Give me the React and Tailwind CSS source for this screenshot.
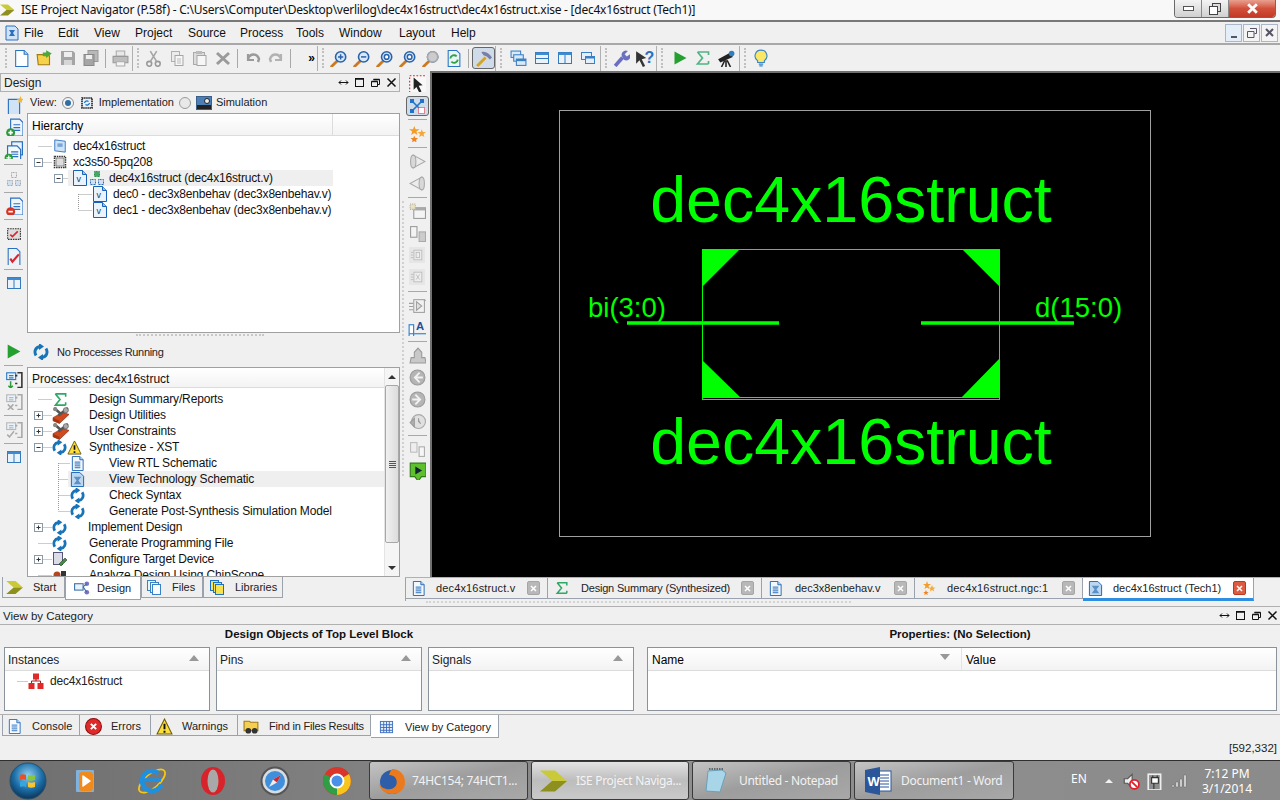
import React from "react";

const Svg = ({ s = 16, w, h, v = "0 0 16 16", c = "", children }) => (
  <svg width={w || s} height={h || s} viewBox={v} className={"shrink-0 " + c}>{children}</svg>
);

const Doc = ({ s = 16, stroke = "#1f66b5", fill = "#f4f8fd", lines = true }) => (
  <Svg s={s}>
    <path d="M2.500 .5h8l3.500 3.500v11.500h-11.500z" fill={fill} stroke={stroke} />
    <path d="M10.500 .5v3.500h3.500" fill="#b9d4f0" stroke={stroke} />
    {lines && <path d="M5 6.500h6M5 8.500h6M5 10.500h6M5 12.500h6" stroke={stroke} />}
  </Svg>
);
const VDoc = () => (
  <Svg s={16}>
    <path d="M1.500 .5h9l4 4v11h-13z" fill="#eaf2fb" stroke="#1762b8" />
    <path d="M10.500 .5v4h4" fill="#9cc3ec" stroke="#1762b8" />
    <text x="4.500" y="12" fontSize="9" fill="#1a3c66" fontFamily="Liberation Sans">v</text>
  </Svg>
);
const Refresh = ({ s = 16, color = "#1874b8" }) => (
  <Svg s={s}>
    <path d="M3 11.500C.5 7 3 3 7 2.500" fill="none" stroke={color} strokeWidth="2.900" />
    <path d="M6 -1l5 3.500-5 3.500z" fill={color} />
    <path d="M13 4.500c2.500 4.500 0 8.500-4 9" fill="none" stroke={color} strokeWidth="2.900" />
    <path d="M10 17l-5-3.500 5-3.500z" fill={color} />
  </Svg>
);
const Sigma = ({ s = 16, color = "#2fa765" }) => (
  <Svg s={s}>
    <path d="M2.500 2h11v3M13.500 14h-11l5-6-5-6M13.500 14v-3" fill="none" stroke={color} strokeWidth="1.700" />
  </Svg>
);
const ToolBox = () => (
  <Svg s={17} c="-my-[1px]">
    <path d="M1 10l9-5 6 2-9 8.500-6-2.500z" fill="#d1491f" stroke="#7a2a10" strokeWidth=".6" />
    <path d="M1 10l6 3v2.500l-6-2.500z" fill="#a8350f" />
    <path d="M2 1l7 6M15 1L6 8" stroke="#555" strokeWidth="2.400" />
    <circle cx="13" cy="3" r="2.400" fill="#aaa" stroke="#555" strokeWidth=".6" />
    <circle cx="3" cy="2" r="2" fill="#888" />
  </Svg>
);
const Warn = ({ s = 16 }) => (
  <Svg s={s}>
    <path d="M8 1l7 14h-14z" fill="#fbdd3c" stroke="#6b5a10" />
    <path d="M8 5.500v5M8 12v1.800" stroke="#111" strokeWidth="1.800" />
  </Svg>
);
const Chip = ({ color = "#333" }) => (
  <Svg s={14} v="0 0 14 14">
    <rect x="1.500" y="1.500" width="11" height="11" fill="#fff" stroke={color} strokeWidth="1.500" strokeDasharray="1.500 .8" />
    <rect x="3" y="3" width="8" height="8" fill="#ddd" stroke={color} strokeWidth=".5" />
  </Svg>
);
const Blocks = ({ dim = false }) => {
  const a = dim ? "#aaa" : "#2f6fb4";
  const t = dim ? "#aaa" : "#2d9150";
  return (
    <Svg s={16}>
      <rect x="5.500" y="1.500" width="5" height="5" fill={dim ? "#eee" : "#46a866"} stroke={t} strokeDasharray="1 .5" />
      <rect x="1.500" y="9.500" width="5" height="5" fill="#cfe0f3" stroke={a} strokeDasharray="1 .5" />
      <rect x="9.500" y="9.500" width="5" height="5" fill="#cfe0f3" stroke={a} strokeDasharray="1 .5" />
    </Svg>
  );
};
const Layout3 = ({ kind = "cols" }) => (
  <Svg s={16}>
    <rect x="1.500" y="2.500" width="13" height="11" fill="#eaf2fb" stroke="#3579bd" />
    <rect x="1.500" y="2.500" width="13" height="2.500" fill="#3f8ad0" />
    {kind === "cols" && <path d="M8 5v8" stroke="#3579bd" />}
    {kind === "rows" && <path d="M1.500 8.500h13" stroke="#3579bd" />}
  </Svg>
);
const Windows = () => (
  <Svg s={17}>
    <rect x="1" y="1" width="9" height="6" fill="#d9e9f8" stroke="#3a80c4" />
    <rect x="3.500" y="4.500" width="9" height="6" fill="#d9e9f8" stroke="#3a80c4" />
    <rect x="6" y="8.500" width="9" height="6" fill="#d9e9f8" stroke="#3a80c4" />
    <rect x="6" y="8.500" width="9" height="2" fill="#3a80c4" />
  </Svg>
);
const Win2 = () => (
  <Svg s={16}>
    <rect x="1.500" y="2.500" width="10" height="7" fill="#e4effa" stroke="#3a80c4" />
    <rect x="5.500" y="6.500" width="9" height="7" fill="#e4effa" stroke="#3a80c4" />
    <rect x="5.500" y="6.500" width="9" height="2" fill="#3a80c4" />
  </Svg>
);
const Mag = ({ kind }) => (
  <Svg s={17}>
    <path d="M1.500 15.500l5-5" stroke="#cc7a22" strokeWidth="2.600" strokeLinecap="round" />
    <circle cx="10" cy="6.500" r="4.800" fill="#d8e9fb" stroke="#2a62a8" strokeWidth="1.500" />
    {kind === "in" && <path d="M7.500 6.500h5M10 4v5" stroke="#2a62a8" strokeWidth="1.400" />}
    {kind === "out" && <path d="M7.500 6.500h5" stroke="#2a62a8" strokeWidth="1.400" />}
    {kind === "ring" && <circle cx="10" cy="6.500" r="2.200" fill="#fff" stroke="#2a62a8" strokeWidth="1.400" />}
    {kind === "dim" && <circle cx="10" cy="6.500" r="4.800" fill="#ccc" stroke="#aaa" strokeWidth="1.500" />}
  </Svg>
);

/* Toolbar atoms */
const Cell = ({ children, c = "" }) => <div className={"w-[23px] h-[24px] flex items-center justify-center shrink-0 " + c}>{children}</div>;
const Grip = () => (
  <div className="w-[9px] h-[20px] flex justify-center shrink-0">
    <div className="w-[2px] h-full border-l-2 border-dotted border-[#c0c0c0]" />
  </div>
);
const TSep = () => <div className="w-[7px] flex justify-center shrink-0"><div className="w-px h-[19px] bg-[#a8a8a8]" /></div>;
const GEnd = () => <div className="w-px h-[25px] bg-[#b0b0b0] shrink-0" />;

const Toolbar = () => (
  <div className="h-[26px] flex items-center bg-[#f0f0f0] pl-px shrink-0">
    <Grip />
    <Cell><Doc s={17} stroke="#2a73c0" fill="#fdfeff" lines={false} /></Cell>
    <Cell>
      <Svg s={18}>
        <path d="M1 5h5l1 1h5v8H2z" fill="#f6d24a" stroke="#a27a12" />
        <path d="M9 1l5 3-5 4V6H6V3h3z" fill="#4da83a" />
      </Svg>
    </Cell>
    <Cell>
      <Svg s={16}><path d="M1 1h12l2 2v12H1z" fill="#a5a5a5" /><rect x="4" y="2" width="8" height="5" fill="#eee" /><rect x="4" y="10" width="8" height="5" fill="#d6d6d6" /></Svg>
    </Cell>
    <Cell>
      <Svg s={16}><rect x="5" y="0.500" width="10" height="11" fill="#b8b8b8" stroke="#999" /><rect x="1" y="4.500" width="10" height="11" fill="#a5a5a5" stroke="#888" /><rect x="3" y="5" width="6" height="4" fill="#eee" /></Svg>
    </Cell>
    <TSep />
    <Cell>
      <Svg s={17}><path d="M4 1h8v5H4z" fill="#e8e8e8" stroke="#aaa" /><path d="M1 6h14v6H1z" fill="#bdbdbd" stroke="#999" /><path d="M4 11h8v4H4z" fill="#f4f4f4" stroke="#aaa" /></Svg>
    </Cell>
    <GEnd />
    <Grip />
    <Cell>
      <Svg s={17}><circle cx="4" cy="13" r="2.300" fill="none" stroke="#9a9a9a" strokeWidth="1.500" /><circle cx="12" cy="13" r="2.300" fill="none" stroke="#9a9a9a" strokeWidth="1.500" /><path d="M5 11L11 1M11 11L5 1" stroke="#a5a5a5" strokeWidth="1.500" /></Svg>
    </Cell>
    <Cell>
      <Svg s={16}><rect x="2.500" y="1.500" width="8" height="10" fill="#ececec" stroke="#b0b0b0" /><rect x="6" y="5.500" width="8" height="10" fill="#f6f6f6" stroke="#a5a5a5" /><path d="M8 9h4M8 11h4M8 13h4" stroke="#bbb" /></Svg>
    </Cell>
    <Cell>
      <Svg s={16}><rect x="1.500" y="2.500" width="11" height="12" fill="#dcdcdc" stroke="#aaa" /><rect x="5" y="5.500" width="9" height="10" fill="#f6f6f6" stroke="#a5a5a5" /><rect x="4" y="1" width="6" height="3" fill="#bbb" /></Svg>
    </Cell>
    <Cell>
      <Svg s={16}><path d="M2 3l12 11M14 3L2 14" stroke="#9a9a9a" strokeWidth="3" /></Svg>
    </Cell>
    <TSep />
    <Cell>
      <Svg s={16}><path d="M3 4v6h6" fill="none" stroke="#9a9a9a" strokeWidth="2.200" /><path d="M3 9C5 3 12 3 14 9l-1 3" fill="none" stroke="#9a9a9a" strokeWidth="2.400" /></Svg>
    </Cell>
    <Cell>
      <Svg s={16}><path d="M13 4v6H7" fill="none" stroke="#b2b2b2" strokeWidth="2.200" /><path d="M13 9C11 3 4 3 2 9l1 3" fill="none" stroke="#b2b2b2" strokeWidth="2.400" /></Svg>
    </Cell>
    <TSep />
    <div className="w-[23px] h-[24px] flex items-center justify-end pr-[2px] text-[12px] leading-none font-bold shrink-0">»</div>
    <GEnd />
    <Grip />
    <Cell><Mag kind="in" /></Cell>
    <Cell><Mag kind="out" /></Cell>
    <Cell><Mag kind="ring" /></Cell>
    <Cell><Mag kind="ring" /></Cell>
    <Cell><Mag kind="dim" /></Cell>
    <Cell>
      <Svg s={17}><path d="M3 .5h8l3 3v12H3z" fill="#eaf3fb" stroke="#2a73c0" /><path d="M5 8a3.500 3.500 0 016-2M12 9a3.500 3.500 0 01-6 2" fill="none" stroke="#2ba43a" strokeWidth="1.800" /></Svg>
    </Cell>
    <TSep />
    <div className="w-[23px] h-[22px] flex items-center justify-center rounded-[3px] border border-[#666] bg-[#cfdbe8] shrink-0">
      <Svg s={17}><path d="M2 15l8-8" stroke="#d9a21c" strokeWidth="2.600" /><path d="M6 2c4-1 7 1 10 5l-2 2-3-3-3-1z" fill="#7a7ea8" /></Svg>
    </div>
    <GEnd />
    <Grip />
    <div className="w-[2px] shrink-0" />
    <Cell><Windows /></Cell>
    <Cell><Layout3 kind="rows" /></Cell>
    <Cell><Layout3 kind="cols" /></Cell>
    <Cell><Win2 /></Cell>
    <div className="w-[1px] shrink-0" />
    <GEnd />
    <Grip />
    <Cell>
      <Svg s={17}><path d="M2 15L9 7" stroke="#6c6fc0" strokeWidth="3.400" /><path d="M9 7a4 4 0 015-6l-3 3 2 2 3-2a4 4 0 01-6 5z" fill="#6c6fc0" /></Svg>
    </Cell>
    <Cell>
      <Svg s={18}><path d="M1 2l9 6-4 1 3 6-2 1-3-6-3 3z" fill="#333" /></Svg>
      <span className="text-[16px] font-bold text-[#2a6fc0] -ml-[8px] leading-none">?</span>
    </Cell>
    <GEnd />
    <Grip />
    <div className="w-[2px] shrink-0" />
    <Cell><Svg s={16}><path d="M2.500 1.500l12 6.500-12 6.500z" fill="#23a02f" /></Svg></Cell>
    <Cell><Sigma s={16} color="#4fb482" /></Cell>
    <Cell>
      <Svg s={18}><path d="M1 9l11-6 2 4-11 5z" fill="#222" /><circle cx="13" cy="4" r="2.500" fill="#2f7fc0" /><path d="M7 10l-3 6M8 10v6M9 10l3 6" stroke="#222" strokeWidth="1.400" /></Svg>
    </Cell>
    <div className="w-[2px] shrink-0" />
    <GEnd />
    <Grip />
    <Cell>
      <Svg s={18}><path d="M8 1a5.200 5.200 0 00-3 9.500V12h6v-1.500A5.200 5.200 0 008 1z" fill="#fbe766" stroke="#3a86c8" /><path d="M6 13.500h4M6.500 15h3" stroke="#3a86c8" strokeWidth="1.200" /></Svg>
    </Cell>
  </div>
);

const PanelBtns = () => (
  <div className="flex items-center gap-[5px] text-[#111]">
    <Svg s={11} v="0 0 11 11"><path d="M1 5.500h9M3 3.500l-2 2 2 2M8 3.500l2 2-2 2" fill="none" stroke="#111" /></Svg>
    <Svg s={11} v="0 0 11 11"><rect x="1.500" y="1.500" width="8" height="8" fill="none" stroke="#111" /><path d="M1.500 2h8" stroke="#111" strokeWidth="1.500" /></Svg>
    <Svg s={11} v="0 0 11 11"><path d="M3.500 2.500h6v5h-2M1.500 4.500h6v5h-6z" fill="none" stroke="#111" /><path d="M3.500 2.500h6M1.500 4.500h6" stroke="#111" strokeWidth="1.500" /></Svg>
    <Svg s={11} v="0 0 11 11"><path d="M1.500 1.500l8 8M9.500 1.500l-8 8" stroke="#111" strokeWidth="1.500" /></Svg>
  </div>
);

const Tree = ({ w = 22, kind = "line", up = false, down = false }) => (
  <Svg w={w} h={16} v={`0 0 ${w} 16`}>
    {up && <path d="M8.500 0v8" stroke="#999" strokeDasharray="1 1" />}
    {down && <path d="M8.500 8v8" stroke="#999" strokeDasharray="1 1" />}
    <path d={`M8.500 8.500H${w}`} stroke="#999" strokeDasharray="1 1" />
    {kind !== "line" && <rect x="4.500" y="4.500" width="8" height="8" fill="#fff" stroke="#8a9aa8" />}
    {kind !== "line" && <path d="M6.500 8.500h4" stroke="#333" />}
    {kind === "plus" && <path d="M8.500 6.500v4" stroke="#333" />}
  </Svg>
);

const Row = ({ children, c = "" }) => <div className={"h-4 flex items-center shrink-0 whitespace-nowrap " + c}>{children}</div>;

const HeaderCell = ({ children, c = "" }) => (
  <div className={"bg-linear-to-b from-[#ffffff] to-[#f3f3f3] border-b border-[#dcdcdc] text-[12px] flex items-center " + c}>{children}</div>
);

const SideBtn = ({ children, c = "" }) => <div className={"h-[22px] w-full flex items-center justify-center shrink-0 " + c}>{children}</div>;
const SideSep = ({ c = "my-[2px]" }) => <div className={"w-[19px] h-px bg-[#a8a8a8] shrink-0 self-center " + c} />;

const AddDoc = ({ color = "#2b9a3a", sym = "plus" }) => (
  <Svg s={18}>
    <path d="M5 1h8l3 3v12H5z" fill="#eef5fc" stroke="#2a6fc0" />
    <path d="M7.500 6h6M7.500 8.500h6M7.500 11h6" stroke="#2a6fc0" />
    <circle cx="5" cy="13" r="4" fill={color} />
    <path d="M3 13h4" stroke="#fff" strokeWidth="1.500" />
    {sym === "plus" && <path d="M5 11v4" stroke="#fff" strokeWidth="1.500" />}
  </Svg>
);

const RunIcon = ({ dim, sym }) => {
  const col = dim ? "#a8a8a8" : "#333";
  const b = dim ? "#b8b8b8" : "#2d7bc4";
  return (
    <Svg s={18}>
      <rect x="1.500" y="2.500" width="8" height="6" fill="#eaf2fb" stroke={b} />
      <path d="M3.500 5h4M3.500 7h4" stroke={b} />
      <path d="M11 2.500h4v13h-4M9 5h2M9 12h2" fill="none" stroke={col} strokeWidth="1.400" />
      {sym === "down" && <path d="M5 10v6M3 14l2 2 2-2" fill="none" stroke="#2a9a3a" strokeWidth="1.300" />}
      {sym === "x" && <path d="M2.500 11l5 5M7.500 11l-5 5" stroke="#aaa" strokeWidth="1.400" />}
      {sym === "check" && <path d="M2 13l2 2 4-5" fill="none" stroke="#aaa" strokeWidth="1.400" />}
    </Svg>
  );
};

const Chevron = ({ w = 20, h = 14 }) => (
  <Svg w={w} h={h} v="0 0 20 14" c="">
    <path d="M0 0h10l8 7H8z" fill="#c9c93a" />
    <path d="M8 7h10l-8 7H0z" fill="#8d8f1e" />
  </Svg>
);

function BottomTab({ w, active, icon, gap, pl, children }) {
  return (
    <div className={`${w} flex items-center shrink-0 ${gap} ${pl} border-x border-b border-[#9aa3ad] ${active ? "h-[23px] bg-white" : "h-[21px] bg-[#efefef]"}`}>
      {icon}
      <span>{children}</span>
    </div>
  );
}

const LeftPane = () => (
  <div className="w-[400px] h-full flex flex-col shrink-0">
    <div className="h-[2px] shrink-0" />
    <div className="h-[19px] mx-0 flex items-center justify-between border border-[#b0b0b0] bg-[#efefef] pl-[3px] pr-[2px] shrink-0">
      <span className="text-[12px] text-[#222]">Design</span>
      <PanelBtns />
    </div>
    <div className="flex h-[241px] shrink-0">
      <div className="w-[27px] flex flex-col items-stretch pt-[2px] shrink-0">
        <SideBtn>
          <Svg s={18}><path d="M3 3h10v14H3z" fill="#cfe2f6" stroke="#2a6fc0" /><path d="M14 0l.8 2.500L17 3l-2 1 .2 2.500L14 5l-2 1.500.2-2.500-2-1 2.500-.5z" fill="#f5b62b" /></Svg>
        </SideBtn>
        <SideBtn><AddDoc /></SideBtn>
        <SideBtn><Svg s={19}><rect x="6.500" y="1.500" width="9" height="11" fill="#eaf3fb" stroke="#2a6fc0" /><path d="M3 5h8l3 3v9H3z" fill="#f4f9fe" stroke="#2a6fc0" /><path d="M6 10h6M6 12h6M6 14h6" stroke="#2a6fc0" /><circle cx="4" cy="15" r="3.500" fill="#2b9a3a" /><path d="M2 15h4M4 13v4" stroke="#fff" /></Svg></SideBtn>
        <SideSep c="mt-[4px] mb-[3px]" />
        <SideBtn><Blocks dim /></SideBtn>
        <SideSep c="my-[2px]" />
        <SideBtn><AddDoc color="#d63324" sym="minus" /></SideBtn>
        <SideSep />
        <SideBtn><Svg s={17}><rect x="2.500" y="3.500" width="12" height="10" fill="#ddd" stroke="#333" strokeDasharray="1.500 .8" /><path d="M5 9l2 2 5-5" fill="none" stroke="#d9252d" strokeWidth="1.500" /></Svg></SideBtn>
        <div className="h-px shrink-0" />
        <SideBtn><Svg s={17}><path d="M3 .5h8l3 3v13H3z" fill="#eaf3fb" stroke="#2a6fc0" /><path d="M5 10l2 3 6-7" fill="none" stroke="#d9252d" strokeWidth="2" /></Svg></SideBtn>
        <SideSep />
        <SideBtn><Layout3 /></SideBtn>
      </div>
      <div className="flex-1 flex flex-col min-w-0">
        <div className="h-[21px] flex items-center text-[11px] gap-[5px] pl-[3px] shrink-0 text-[#222]">
          <span>View:</span>
          <span className="w-[12px] h-[12px] rounded-full border border-[#8a8a8a] bg-[#f4f4f4] flex items-center justify-center"><span className="w-[6px] h-[6px] rounded-full bg-[#2b6ea8]" /></span>
          <Svg s={16}><rect x="3" y="3" width="10" height="10" fill="#e6f0fa" stroke="#222" strokeDasharray="1.500 .6" strokeWidth="1.600" /><path d="M5.500 8a2.500 2.500 0 014-1.500M10.500 8a2.500 2.500 0 01-4 1.500" fill="none" stroke="#1f74c0" strokeWidth="1.300" /></Svg>
          <span className="-ml-px">Implementation</span>
          <span className="w-[12px] h-[12px] rounded-full border border-[#9a9a9a] bg-[#e8e8e8]" />
          <Svg s={16}><rect x="0.500" y="1.500" width="15" height="13" fill="#4a7fb8" stroke="#3a5f88" /><circle cx="11" cy="6" r="2.500" fill="#eee" stroke="#222" /><rect x="1" y="10" width="14" height="4" fill="#222" /></Svg>
          <span className="-ml-px">Simulation</span>
        </div>
        <div className="flex-1 border border-[#a0a0a0] bg-white flex flex-col min-h-0">
          <div className="flex h-[22px] shrink-0">
            <HeaderCell c="w-[305px] pl-[4px] pt-[2px] border-r border-r-[#dcdcdc]">Hierarchy</HeaderCell>
            <HeaderCell c="flex-1" />
          </div>
          <div className="pt-[2px] text-[12px] tracking-[-0.2px] text-[#111] flex flex-col">
            <Row c="pl-[2px]">
              <Tree />
              <span className="w-[1px]" />
              <Svg s={14} v="0 0 14 16"><path d="M1 1l12 1.500V15L1 13.500z" fill="#cfe2f6" stroke="#2a6fc0" /><rect x="4" y="5" width="6" height="4" fill="#7aa6d6" /></Svg>
              <span className="ml-[6px]">dec4x16struct</span>
            </Row>
            <Row c="pl-[2px]">
              <Tree kind="minus" />
              <span className="w-[1px]" />
              <Chip />
              <span className="ml-[6px]">xc3s50-5pq208</span>
            </Row>
            <Row c="pl-[22px]">
              <Tree kind="minus" w={18} />
              <div className="flex items-center bg-[#efefef] h-4 w-[265px]">
                <span className="w-[4px]" />
                <VDoc />
                <span className="w-[1px]" />
                <Blocks />
                <span className="ml-[4px]">dec4x16struct (dec4x16struct.v)</span>
              </div>
            </Row>
            <Row c="pl-[42px]">
              <Tree down />
              <VDoc />
              <span className="ml-[5px]">dec0 - dec3x8enbehav (dec3x8enbehav.v)</span>
            </Row>
            <Row c="pl-[42px]">
              <Tree up />
              <VDoc />
              <span className="ml-[5px]">dec1 - dec3x8enbehav (dec3x8enbehav.v)</span>
            </Row>
          </div>
        </div>
      </div>
    </div>
    <div className="h-[4px] flex justify-center items-center shrink-0">
      <div className="w-[128px] h-[2px] border-t-2 border-dotted border-[#c8c8c8]" />
    </div>
    <div className="flex h-[240px] shrink-0">
      <div className="w-[27px] flex flex-col items-stretch pt-[3px] shrink-0">
        <SideBtn><Svg s={17}><path d="M2.500 1.500l12 6.500-12 6.500z" fill="#23a02f" /></Svg></SideBtn>
        <SideSep c="my-[2.500px]" />
        <SideBtn><RunIcon sym="down" /></SideBtn>
        <SideBtn><RunIcon dim sym="x" /></SideBtn>
        <SideSep c="my-[2.500px]" />
        <SideBtn><RunIcon dim sym="check" /></SideBtn>
        <SideSep c="my-[2.500px]" />
        <SideBtn><Layout3 /></SideBtn>
      </div>
      <div className="flex-1 flex flex-col min-w-0">
        <div className="h-[30px] flex items-center gap-[8px] pl-[6px] text-[11px] tracking-[-0.3px] text-[#222] shrink-0">
          <Refresh s={16} />
          <span>No Processes Running</span>
        </div>
        <div className="flex-1 flex border border-[#a0a0a0] bg-white min-h-0">
          <div className="flex-1 min-w-0 flex flex-col overflow-hidden">
            <HeaderCell c="h-[19px] pl-[4px] pt-[2px] mt-[1px] shrink-0 text-[#111]">Processes: dec4x16struct</HeaderCell>
            <div className="text-[12px] tracking-[-0.15px] text-[#111] flex flex-col pt-[3px]">
              <Row c="pl-[2px]"><Tree /><span className="w-[1px]" /><Sigma s={15} /><span className="ml-[21px]">Design Summary/Reports</span></Row>
              <Row c="pl-[2px]"><Tree kind="plus" /><ToolBox /><span className="ml-[20px]">Design Utilities</span></Row>
              <Row c="pl-[2px]"><Tree kind="plus" /><ToolBox /><span className="ml-[20px]">User Constraints</span></Row>
              <Row c="pl-[2px]"><Tree kind="minus" /><Refresh s={15} /><Warn s={15} /><span className="ml-[7px]">Synthesize - XST</span></Row>
              <Row c="pl-[22px]"><Tree w={20} down /><Doc s={15} /><span className="ml-[24px]">View RTL Schematic</span></Row>
              <Row c="pl-[22px]">
                <Tree w={18} up down />
                <div className="flex items-center bg-[#efefef] h-4 flex-1">
                  <span className="w-[2px]" />
                  <Svg s={15}><path d="M1.500 .5h9l4 4v11h-13z" fill="#bcd6f0" stroke="#1762b8" /><path d="M4 5h8l-3 4 3 4H4l3-4z" fill="#5b8fc8" /></Svg>
                  <span className="ml-[24px]">View Technology Schematic</span>
                </div>
              </Row>
              <Row c="pl-[22px]"><Tree w={20} up down /><Refresh s={15} /><span className="ml-[24px]">Check Syntax</span></Row>
              <Row c="pl-[22px]"><Tree w={20} up /><Refresh s={15} /><span className="ml-[24px]">Generate Post-Synthesis Simulation Model</span></Row>
              <Row c="pl-[2px]"><Tree kind="plus" /><Refresh s={15} /><span className="ml-[21px]">Implement Design</span></Row>
              <Row c="pl-[2px]"><Tree /><Refresh s={15} /><span className="ml-[22px]">Generate Programming File</span></Row>
              <Row c="pl-[2px]"><Tree kind="plus" /><Svg s={16}><rect x="1.500" y="1.500" width="9" height="12" fill="#dcdce8" stroke="#557" /><path d="M7 13l6-6 2 2-6 6z" fill="#3e8f3a" stroke="#222" strokeWidth=".5" /></Svg><span className="ml-[21px]">Configure Target Device</span></Row>
              <Row c="pl-[2px]"><Tree /><Svg s={16}><circle cx="5" cy="8" r="3.500" fill="#b5451f" /><rect x="9" y="4" width="5" height="7" fill="#333" /></Svg><span className="ml-[21px]">Analyze Design Using ChipScope</span></Row>
            </div>
          </div>
          <div className="w-[15px] flex flex-col items-center bg-[#f5f5f5] border-l border-[#e4e4e4] shrink-0">
            <div className="h-[17px] flex items-center justify-center"><div className="w-0 h-0 border-x-[4px] border-x-transparent border-b-[4px] border-b-[#333]" /></div>
            <div className="w-[14px] h-[158px] rounded-[2px] border border-[#a8a8a8] bg-linear-to-r from-[#f0f0f0] to-[#dcdcdc] flex flex-col items-center justify-center gap-px">
              <span className="w-[7px] h-px bg-[#555]" /><span className="w-[7px] h-px bg-[#555]" /><span className="w-[7px] h-px bg-[#555]" /><span className="w-[7px] h-px bg-[#555]" />
            </div>
            <div className="flex-1" />
            <div className="h-[17px] flex items-center justify-center"><div className="w-0 h-0 border-x-[4px] border-x-transparent border-t-[4px] border-t-[#333]" /></div>
          </div>
        </div>
      </div>
    </div>
    <div className="flex items-start h-[23px] pl-[2px] text-[11px] text-[#222] shrink-0">
      <BottomTab w="w-[63px]" icon={<Chevron w={19} h={13} />} gap="gap-[8px]" pl="pl-[3px]">Start</BottomTab>
      <BottomTab w="w-[76px]" active icon={<Svg s={17}><rect x="1.500" y="3.500" width="8" height="6" fill="#eaf2fb" stroke="#3a6ea8" /><circle cx="13" cy="3.500" r="2.200" fill="#7a74c0" /><circle cx="13" cy="11.500" r="2.200" fill="#7a74c0" /><path d="M9.500 6.500L13 3.500M9.500 6.500l3.500 5" stroke="#3a6ea8" /></Svg>} gap="gap-[7px]" pl="pl-[7px]">Design</BottomTab>
      <BottomTab w="w-[62px]" icon={<Svg s={16}><rect x="1.500" y="1.500" width="8" height="10" fill="#eef4fb" stroke="#3a80c4" /><rect x="4.500" y="3.500" width="8" height="10" fill="#eef4fb" stroke="#3a80c4" /><rect x="6.500" y="5.500" width="8" height="10" fill="#f8fbff" stroke="#3a80c4" /></Svg>} gap="gap-[10px]" pl="pl-[4px]">Files</BottomTab>
      <BottomTab w="w-[80px]" icon={<Svg s={16}><rect x="1.500" y="1.500" width="8" height="10" fill="#f7e34f" stroke="#1f70c0" /><rect x="4.500" y="3.500" width="8" height="10" fill="#f7e34f" stroke="#1f70c0" /><rect x="6.500" y="5.500" width="8" height="10" fill="#f7e34f" stroke="#1f70c0" /></Svg>} gap="gap-[10px]" pl="pl-[5px]">Libraries</BottomTab>
    </div>
  </div>
);

const VBtn = ({ children }) => <div className="h-[22px] flex items-center justify-center shrink-0">{children}</div>;
const VSep = () => <div className="h-px w-[19px] bg-[#a8a8a8] self-center my-[2.500px] shrink-0" />;
const Circ = ({ d }) => (
  <Svg s={17}>
    <circle cx="8" cy="8" r="7" fill="#b5b5b5" stroke="#9a9a9a" />
    <path d={d} fill="none" stroke="#f2f2f2" strokeWidth="1.700" />
  </Svg>
);

const VToolbar = () => (
  <div className="w-[25px] h-full pt-[1px] pr-[1px] flex flex-col shrink-0 bg-[#f0f0f0]">
    <VBtn>
      <Svg s={18}><rect x="1.500" y="1.500" width="15" height="15" fill="#f8f8f8" stroke="#e21b24" strokeDasharray="1.500 1.500" /><path d="M5 3l8 7-3.500.5 2.500 5-2 1-2.500-5L5 14z" fill="#222" /></Svg>
    </VBtn>
    <div className="h-[20px] w-[23px] mx-auto mt-[2px] rounded-[3px] border border-[#666] bg-[#cfdbe8] flex items-center justify-center shrink-0">
      <Svg s={16}><path d="M3 3l10 10M13 3L3 13" stroke="#1f74c8" strokeWidth="1.600" /><rect x="1" y="1" width="4" height="4" fill="#1f74c8" /><rect x="11" y="1" width="4" height="4" fill="#1f74c8" /><rect x="1" y="11" width="4" height="4" fill="#1f74c8" /><rect x="9.500" y="9.500" width="6" height="6" fill="#fff" stroke="#e21b24" strokeDasharray="1 1" /></Svg>
    </div>
    <VSep />
    <VBtn><Svg s={17}><path d="M5 1l1.200 3H10L7 6l1 3.500L5 7.500 2 9.500 3 6 0 4h3.800z" fill="#f39c2a" /><path d="M12 4l1 2.500 3 .2-2.300 1.800.7 2.800-2.400-1.500-2.400 1.500.7-2.800L8 6.700l3-.2z" fill="#f3a93a" /><path d="M5 10l1 2.300h2.500L6.600 14l.6 2.500L5 15l-2.200 1.500.6-2.500-1.900-1.700H4z" fill="#f0821f" /></Svg></VBtn>
    <VSep />
    <VBtn><Svg s={17}><path d="M4 2l11 6-11 6z" fill="#ececec" stroke="#a8a8a8" /><ellipse cx="4" cy="8" rx="2.500" ry="6" fill="#d8d8d8" stroke="#a8a8a8" /></Svg></VBtn>
    <VBtn><Svg s={17}><path d="M12 2L1 8l11 6z" fill="#ececec" stroke="#a8a8a8" /><ellipse cx="12" cy="8" rx="2.500" ry="6" fill="#d8d8d8" stroke="#a8a8a8" /></Svg></VBtn>
    <VSep />
    <VBtn><Svg s={17}><rect x="4.500" y="4.500" width="11" height="10" fill="#f4f4f4" stroke="#999" /><rect x="4.500" y="4.500" width="11" height="2.500" fill="#aaa" /><rect x="1" y="1" width="5" height="5" fill="#e8e0c0" stroke="#aaa" strokeDasharray="1 1" /></Svg></VBtn>
    <VBtn><Svg s={17}><rect x="1.500" y="1.500" width="6" height="10" fill="#f4f4f4" stroke="#999" /><rect x="9.500" y="6.500" width="6" height="9" fill="#ccc" stroke="#aaa" /></Svg></VBtn>
    <VBtn><div className="bg-[#e6e6e6] p-[1px]"><Svg s={14} v="0 0 16 16"><rect x="4.500" y="2.500" width="9" height="11" fill="#eee" stroke="#bbb" /><rect x="7" y="5" width="4" height="6" fill="none" stroke="#bbb" /><path d="M1 5h3M1 8h3M1 11h3" stroke="#bbb" /></Svg></div></VBtn>
    <VBtn><div className="bg-[#e6e6e6] p-[1px]"><Svg s={14} v="0 0 16 16"><rect x="4.500" y="2.500" width="9" height="11" fill="#eee" stroke="#bbb" /><path d="M7 5l4 6M11 5l-4 6" stroke="#bbb" /><path d="M1 5h3M1 8h3M1 11h3" stroke="#bbb" /></Svg></div></VBtn>
    <VSep />
    <VBtn><Svg s={17}><rect x="4.500" y="2.500" width="10" height="12" fill="#f2f2f2" stroke="#a0a0a0" /><path d="M7 4.500l5 4-5 4zM0 6h4M0 9h4M0 12h4M14 3h3" fill="#e0e0e0" stroke="#a0a0a0" /></Svg></VBtn>
    <VBtn>
      <Svg s={18}><rect x="1" y="6" width="4" height="11" fill="#fff" stroke="#2a80d0" /><path d="M1 14h16" stroke="#2a80d0" /><text x="7" y="11" fontSize="10" fontWeight="bold" fill="#1f4f9a" fontFamily="Liberation Sans">A</text></Svg>
    </VBtn>
    <VSep />
    <VBtn><Svg s={17}><path d="M8.500 1L12 5v5h3l1 5H1l1-5h3V5z" fill="#c8c8c8" stroke="#9a9a9a" /></Svg></VBtn>
    <VBtn><Circ d="M10 3.500L5.500 8l4.500 4.500M5.500 8H13" /></VBtn>
    <VBtn><Circ d="M6 3.500L10.500 8 6 12.500M10.500 8H3" /></VBtn>
    <VBtn><Svg s={17}><circle cx="9" cy="8" r="6.500" fill="#e0e0e0" stroke="#a8a8a8" /><path d="M1 9l4-4v8zM9 5v3l2 2" fill="#b0b0b0" stroke="#999" /></Svg></VBtn>
    <VSep />
    <VBtn><Svg s={17}><rect x="1.500" y="1.500" width="6" height="9" fill="#eee" stroke="#bbb" /><rect x="9.500" y="5.500" width="5" height="9" fill="#f6f6f6" stroke="#aaa" /></Svg></VBtn>
    <VBtn><Svg s={18}><path d="M2 1h14v12h-4l-3 4-3-4H2z" fill="#5fc02e" stroke="#2f7a18" /><path d="M6.500 4l6 3.500-6 3.500z" fill="#123" /></Svg></VBtn>
  </div>
);

const Canvas = () => (
  <div className="flex-1 h-full bg-black border-t-2 border-l-2 border-[#707070] overflow-hidden min-w-0">
    <svg viewBox="432 73 850 504" width="850" height="504" className="block" fontFamily="Liberation Sans">
      <rect x="559.500" y="110.500" width="591" height="426" fill="none" stroke="#a0a0a0" />
      <rect x="702.500" y="249.500" width="297" height="150" fill="none" stroke="#00ff00" />
      <path d="M702 397.500h298" stroke="#00ff00" />
      <path d="M702 249h38l-38 38zM1000 249h-38l38 38zM702 360l39 38h-39zM1000 358l-39 40h39z" fill="#00ff00" />
      <path d="M627 323h152M921 323h153" stroke="#00ff00" strokeWidth="3.600" />
      <text x="851" y="222" textAnchor="middle" fontSize="64.500" fill="#00ff00">dec4x16struct</text>
      <text x="851" y="464" textAnchor="middle" fontSize="64.500" fill="#00ff00">dec4x16struct</text>
      <text x="588" y="317" fontSize="27.500" fill="#00ff00">bi(3:0)</text>
      <text x="1035" y="317" fontSize="27.500" fill="#00ff00">d(15:0)</text>
    </svg>
  </div>
);

const TabClose = ({ active }) => (
  <span className={`w-[13px] h-[14px] rounded-[2px] flex items-center justify-center shrink-0 ${active ? "bg-[#dd5b3f] border border-[#b83a22]" : "bg-[#b8b8b8] border border-[#a5a5a5]"}`}>
    <Svg s={7} v="0 0 7 7"><path d="M1 1l5 5M6 1L1 6" stroke="#fff" strokeWidth="1.500" /></Svg>
  </span>
);

const DocTab = ({ w, icon, pl, label, gap, active, c = "" }) => (
  <div className={`${w} ${pl} flex items-center shrink-0 text-[11px] text-[#222] border-r border-[#9aa3ad] ${active ? "h-[23px] bg-white border-b-[3px] border-b-[#2f8ee0]" : "h-[21px] border-b border-b-[#9aa3ad] bg-[#efefef]"}`}>
    {icon}
    <span className={`${gap} ${c} whitespace-nowrap flex-1`}>{label}</span>
    <span className="mr-[7px]"><TabClose active={active} /></span>
  </div>
);

const SmallStar = () => (
  <Svg s={16}><path d="M6 1l1 3h3L7.500 6l1 3L6 7.500 3.500 9l1-3L2 4h3z" fill="#f39c2a" /><path d="M11 5l1 2.500h2.500L12.500 9l.7 2.500L11 10l-2.200 1.500.7-2.500-2-1.500H10z" fill="#f3a93a" /><path d="M5 10l.8 2h2L6.200 13.300l.5 2L5 14l-1.700 1.300.5-2L2.200 12h2z" fill="#f0821f" /></Svg>
);

const RightPane = () => (
  <div className="flex-1 h-full flex flex-col min-w-0">
    <div className="flex h-[506px] shrink-0">
      <VToolbar />
      <Canvas />
    </div>
    <div className="flex items-start h-[24px] shrink-0 border-t border-[#b0b0b0]">
      <div className="flex border-l border-[#9aa3ad]">
        <DocTab w="w-[142px]" pl="pl-[5px]" icon={<Doc s={15} />} gap="ml-[10px]" label="dec4x16struct.v" c="tracking-[0.15px]" />
        <DocTab w="w-[214px]" pl="pl-[7px]" icon={<Sigma s={14} />} gap="ml-[12px]" label="Design Summary (Synthesized)" c="tracking-[-0.2px]" />
        <DocTab w="w-[153px]" pl="pl-[6px]" icon={<Doc s={15} />} gap="ml-[12px]" label="dec3x8enbehav.v" />
        <DocTab w="w-[168px]" pl="pl-[6px]" icon={<SmallStar />} gap="ml-[10px]" label="dec4x16struct.ngc:1" c="tracking-[0.15px]" />
        <DocTab w="w-[171px]" pl="pl-[5px]" active icon={<Svg s={15}><path d="M1.500 .5h9l4 4v11h-13z" fill="#bcd6f0" stroke="#1762b8" /><path d="M4 5h8l-3 4 3 4H4l3-4z" fill="#5b8fc8" /></Svg>} gap="ml-[10px]" label="dec4x16struct (Tech1)" />
      </div>
    </div>
    <div className="h-[5px] flex items-start pl-[21px] shrink-0">
      <div className="w-[425px] border-t-2 border-dotted border-[#d4d4d4]" />
    </div>
  </div>
);

const TblBox = ({ w, title, children }) => (
  <div className={`${w} h-[64px] border border-[#8a939c] bg-white flex flex-col shrink-0`}>
    <HeaderCell c="h-[23px] pl-[3px] pt-[2px] justify-between pr-[10px] shrink-0 text-[#222]">
      <span>{title}</span>
      <span className="w-0 h-0 border-x-[5px] border-x-transparent border-b-[6px] border-b-[#999] -mt-[5px]" />
    </HeaderCell>
    {children}
  </div>
);

const BtmTab = ({ w, icon, gap, pl, active, children, c = "" }) => (
  <div className={`${w} ${pl} ${gap} ${c} pt-[2px] flex items-center shrink-0 text-[11px] text-[#222] border-r border-b border-[#9aa3ad] ${active ? "h-[23px] bg-white" : "h-[21px] bg-[#efefef]"}`}>
    {icon}
    <span className="whitespace-nowrap">{children}</span>
  </div>
);

const BottomPanel = () => (
  <div className="h-[132px] flex flex-col shrink-0">
    <div className="h-[19px] border-y border-[#b0b0b0] flex items-center justify-between pl-[3px] pr-[2px] text-[11.500px] text-[#222] shrink-0">
      <span className="pt-[2px]">View by Category</span>
      <PanelBtns />
    </div>
    <div className="h-[90px] border-b border-[#b0b0b0] shrink-0 flex flex-col">
      <div className="flex h-[22px] items-center pb-[2px] text-[11.500px] font-bold text-[#111] shrink-0">
        <div className="w-[638px] text-center">Design Objects of Top Level Block</div>
        <div className="flex-1 text-center pl-[2px]">Properties: (No Selection)</div>
      </div>
      <div className="flex pl-[4px]">
        <TblBox w="w-[206px]" title="Instances">
          <div className="flex items-center text-[12px] tracking-[-0.2px] text-[#222] pl-[4px] h-[18px] pt-px">
            <Tree w={19} />
            <Svg s={16}><rect x="5" y="0.500" width="6" height="6" fill="#e02a2a" /><rect x="0.500" y="10" width="6" height="6" fill="#e02a2a" /><rect x="9.500" y="10" width="6" height="6" fill="#e02a2a" /><path d="M8 6v2M3.500 10V8h9v2" fill="none" stroke="#a01818" /></Svg>
            <span className="ml-[6px]">dec4x16struct</span>
          </div>
        </TblBox>
        <div className="w-[6px] shrink-0" />
        <TblBox w="w-[206px]" title="Pins" />
        <div className="w-[6px] shrink-0" />
        <TblBox w="w-[206px]" title="Signals" />
        <div className="w-[13px] shrink-0" />
        <div className="w-[630px] h-[64px] border border-[#8a939c] bg-white shrink-0">
          <div className="flex h-[23px]">
            <HeaderCell c="w-[314px] pl-[4px] pt-[2px] justify-between pr-[11px] border-r border-r-[#e4e4e4]">
              <span>Name</span>
              <span className="w-0 h-0 border-x-[5px] border-x-transparent border-t-[6px] border-t-[#999] -mt-[6px]" />
            </HeaderCell>
            <HeaderCell c="flex-1 pl-[4px] pt-[2px]">Value</HeaderCell>
          </div>
        </div>
      </div>
    </div>
    <div className="flex items-start pl-[2px] h-[23px] shrink-0">
      <div className="border-l border-[#9aa3ad] h-[21px]" />
      <BtmTab w="w-[77px]" pl="pl-[4px]" gap="gap-[10px]" icon={<Doc s={15} stroke="#2a6fc0" fill="#f7fbff" />}>Console</BtmTab>
      <BtmTab w="w-[71px]" pl="pl-[5px]" gap="gap-[9px]" icon={<Svg s={17}><circle cx="8" cy="8" r="7.500" fill="#e02a2a" stroke="#8a1212" /><path d="M5.500 5.500l5 5M10.500 5.500l-5 5" stroke="#fff" strokeWidth="1.800" /></Svg>}>Errors</BtmTab>
      <BtmTab w="w-[87px]" pl="pl-[5px]" gap="gap-[9px]" icon={<Warn s={17} />}>Warnings</BtmTab>
      <BtmTab w="w-[133px]" pl="pl-[5px]" gap="gap-[9px]" c="tracking-[-0.2px]" icon={<Svg s={17}><path d="M1 3h5l1 1h7v8H1z" fill="#f4cf50" stroke="#a27a12" /><circle cx="5" cy="12" r="2.700" fill="#333" /><circle cx="11" cy="12" r="2.700" fill="#333" /></Svg>}>Find in Files Results</BtmTab>
      <BtmTab w="w-[128px]" pl="pl-[8px]" gap="gap-[11px]" active icon={<Svg s={15}><rect x="1.500" y="1.500" width="13" height="12" fill="#e8f0fb" stroke="#3f6fc0" /><path d="M1.500 5h13M1.500 8h13M1.500 11h13M5 1.500v12M8 1.500v12M11 1.500v12" stroke="#3f6fc0" /></Svg>}>View by Category</BtmTab>
    </div>
  </div>
);

const TaskBtn = ({ w, icon, children, active }) => (
  <div className={`${w} h-[39px] flex items-center gap-[6px] pl-[8px] rounded-[3px] border border-[#3a3a3a] shrink-0 text-[12px] tracking-[-0.3px] whitespace-nowrap overflow-hidden ${active ? "bg-linear-to-b from-[#e2e2e2] via-[#bdbdbd] to-[#c9c9c9] text-[#f4f4f4]" : "bg-linear-to-br from-[#c4c4c4] via-[#9d9d9d] to-[#a8a8a8] text-[#f2f2f2]"}`}>
    {icon}
    <span>{children}</span>
  </div>
);

const Taskbar = () => (
  <div className="h-[40px] flex items-center border-t border-[#2f2f2f] bg-linear-to-r from-[#6f6f6f] via-[#8f8f8f] to-[#8b8b8b] text-white shrink-0" style={{ fontFamily: "Noto Sans, sans-serif" }}>
    <div className="w-[56px] flex justify-center shrink-0">
      <Svg s={38} v="0 0 38 38">
        <defs>
          <radialGradient id="orb" cx="50%" cy="35%" r="65%"><stop offset="0" stopColor="#8fd0f0" /><stop offset=".6" stopColor="#1c6ea8" /><stop offset="1" stopColor="#0c3558" /></radialGradient>
        </defs>
        <circle cx="19" cy="19" r="18" fill="url(#orb)" stroke="#26506e" />
        <path d="M11 13c2-1 4-1 6 0v5c-2-1-4-1-6 0z" fill="#e8502a" />
        <path d="M19 13c2 1 4 1 7 0v5c-3 1-5 1-7 0z" fill="#8ac53f" />
        <path d="M11 20c2-1 4-1 6 0v5c-2-1-4-1-6 0z" fill="#36a5e0" />
        <path d="M19 20c2 1 4 1 7 0v5c-3 1-5 1-7 0z" fill="#f7c52e" />
      </Svg>
    </div>
    <div className="flex items-center shrink-0 w-[313px]">
      <div className="w-[58px] flex justify-center">
        <Svg s={28} v="0 0 28 28"><rect x="5" y="3" width="18" height="22" rx="1" fill="#7fb2dc" /><rect x="8" y="5" width="14" height="19" rx="3" fill="#f08a1d" /><path d="M12 9l7 5-7 5z" fill="#fff" stroke="#fff" strokeLinejoin="round" strokeWidth="1.500" /></Svg>
      </div>
      <div className="w-[76px] flex justify-center">
        <Svg s={32} v="0 0 32 32"><ellipse cx="16" cy="16" rx="16" ry="7" fill="none" stroke="#f5c518" strokeWidth="1.800" transform="rotate(-40 16 16)" /><circle cx="16" cy="16" r="10" fill="none" stroke="#1f8fe0" strokeWidth="4.500" strokeDasharray="50 13" transform="rotate(20 16 16)" /><path d="M7 15h18" stroke="#1f8fe0" strokeWidth="3.500" /></Svg>
      </div>
      <div className="w-[46px] flex justify-center">
        <Svg s={30} v="0 0 30 30"><ellipse cx="15" cy="15" rx="12" ry="14" fill="#d9232a" /><ellipse cx="15" cy="15" rx="5.500" ry="11.500" fill="#a8a8a8" /></Svg>
      </div>
      <div className="w-[78px] flex justify-center">
        <Svg s={30} v="0 0 30 30"><circle cx="15" cy="15" r="13.500" fill="#d8dde2" stroke="#555" strokeWidth="2" /><circle cx="15" cy="15" r="10" fill="#3f8fdc" /><path d="M21 9l-8 4.500-4 7.500 8-4.500z" fill="#eee" /><path d="M21 9l-8 4.500 4 3z" fill="#d9232a" /></Svg>
      </div>
      <div className="w-[46px] flex justify-center">
        <Svg s={30} v="0 0 30 30"><circle cx="15" cy="15" r="14" fill="#d9352a" /><path d="M15 15L27 8a14 14 0 01-12 21z" fill="#f6c61c" /><path d="M15 15L15 29A14 14 0 013 8z" fill="#2f9e44" /><circle cx="15" cy="15" r="6.500" fill="#4a8fe8" stroke="#fff" strokeWidth="2" /></Svg>
      </div>
    </div>
    <div className="flex gap-[3px] shrink-0">
      <TaskBtn w="w-[159px]" icon={<Svg s={28} v="0 0 28 28"><circle cx="14" cy="15" r="12" fill="#2f5ea8" /><path d="M14 2c8 0 13 6 13 13 0 8-6 12-13 12C7 27 2 23 1 16c2 5 7 7 12 6 5-1 7-6 5-10-1-3-4-4-7-4 1-3 2-5 3-6z" fill="#ea7a1d" /></Svg>}>74HC154; 74HCT1...</TaskBtn>
      <TaskBtn w="w-[158px]" active icon={<Chevron w={30} h={28} />}>ISE Project Naviga...</TaskBtn>
      <TaskBtn w="w-[159px]" icon={<Svg s={30} v="0 0 30 30"><path d="M7 5l14-1 4 3-6 19-14-1z" fill="#a8d6e8" stroke="#6aa0b8" /><path d="M8 3l14 0" stroke="#666" strokeWidth="2" strokeDasharray="1.500 1" /></Svg>}><span className="ml-[2px]">Untitled - Notepad</span></TaskBtn>
      <TaskBtn w="w-[160px]" icon={<Svg s={30} v="0 0 30 30"><rect x="12" y="5" width="16" height="20" fill="#fff" stroke="#2b579a" /><path d="M16 9h10M16 12h10M16 15h10M16 18h10M16 21h10" stroke="#2b579a" /><path d="M2 4l15-3v28L2 26z" fill="#2b579a" /><text x="4.500" y="20" fontSize="13" fontWeight="bold" fill="#fff" fontFamily="Liberation Sans">W</text></Svg>}><span className="ml-[2px]">Document1 - Word</span></TaskBtn>
    </div>
    <div className="flex-1 flex items-center text-[12px] pl-[57px] min-w-0">
      <span className="text-[12px] -mt-[4px] w-[26px]">EN</span>
      <Svg s={10} v="0 0 10 10" c="ml-[7px]"><path d="M1 7l4-4 4 4z" fill="#f2f2f2" /></Svg>
      <Svg s={18} c="ml-[8px]"><path d="M2 6h3l4-4v12l-4-4H2z" fill="#eee" stroke="#555" /><circle cx="11" cy="11" r="4" fill="#fff" stroke="#e0202a" strokeWidth="1.600" /><path d="M8.500 8.500l5 5" stroke="#e0202a" strokeWidth="1.600" /></Svg>
      <Svg s={18} c="ml-[6px]"><rect x="2" y="2" width="11" height="14" fill="none" stroke="#eee" strokeWidth="1.500" /><path d="M5 5h6v5H5zM7 10v5M6 3v2M10 3v2" fill="#fff" stroke="#333" /></Svg>
      <Svg s={16} c="ml-[7px]"><path d="M1 14h2v-2H1zM5 14h2V9H5zM9 14h2V6H9zM13 14h2V2h-2z" fill="#eee" stroke="#666" strokeWidth=".5" /></Svg>
      <div className="ml-[16px] flex flex-col items-center leading-[15px] text-[12px] w-[48px]">
        <span>7:12 PM</span>
        <span>3/1/2014</span>
      </div>
    </div>
  </div>
);

export default function App() {
  const mono = { fontFamily: "Liberation Sans, sans-serif" };
  return (
    <div className="w-[1280px] h-[800px] flex flex-col overflow-hidden bg-[#f0f0f0]" style={mono}>
      <div className="h-[22px] flex items-center justify-between border-b-2 border-[#787878] bg-[#f8f8f8] shrink-0" >
        <div className="flex items-center text-[12px] text-[#111]" style={{ fontFamily: "Noto Sans, sans-serif" }}>
          <Chevron w={16} h={12} />
          <span className="ml-[5px] tracking-[-0.25px] whitespace-nowrap">{"ISE Project Navigator (P.58f) - C:\\Users\\Computer\\Desktop\\verlilog\\dec4x16struct\\dec4x16struct.xise - [dec4x16struct (Tech1)]"}</span>
        </div>
        <div className="flex h-[18px] self-start mr-[4px] border-x border-b border-[#6a6a6a] rounded-b-[4px] overflow-hidden">
          <div className="w-[27px] flex items-center justify-center bg-linear-to-b from-[#f4f4f4] to-[#d0d0d0] border-r border-[#888]"><div className="w-[11px] h-[5px] border border-[#555] bg-white" /></div>
          <div className="w-[27px] flex items-center justify-center bg-linear-to-b from-[#f4f4f4] to-[#d0d0d0] border-r border-[#888]"><Svg s={12} v="0 0 12 12"><rect x="3.500" y=".5" width="8" height="8" fill="#ddd" stroke="#444" /><rect x=".5" y="3.500" width="8" height="8" fill="#fff" stroke="#444" /></Svg></div>
          <div className="w-[46px] flex items-center justify-center bg-linear-to-b from-[#e8a090] via-[#d2503a] to-[#c23a26]"><Svg s={13} v="0 0 12 12"><path d="M2 2l8 8M10 2l-8 8" stroke="#fff" strokeWidth="2.600" /></Svg></div>
        </div>
      </div>
      <div className="h-[23px] flex items-center justify-between border-b-2 border-[#a8a8a8] shrink-0">
        <div className="flex items-center text-[12px] text-[#111]">
          <div className="w-[24px] flex justify-center"><Svg s={16}><path d="M2 1h9l3 3v11H2z" fill="#cfe2f6" stroke="#2a6fc0" /><path d="M5 5h6l-2 3 2 3H5l2-3z" fill="#2a6fc0" /></Svg></div>
          {[["File", "w-[34px]"], ["Edit", "w-[36px]"], ["View", "w-[41px]"], ["Project", "w-[53px]"], ["Source", "w-[52px]"], ["Process", "w-[56px]"], ["Tools", "w-[43px]"], ["Window", "w-[60px]"], ["Layout", "w-[52px]"], ["Help", "w-[40px]"]].map(([t, w]) => (
            <span key={t} className={w}>{t}</span>
          ))}
        </div>
        <div className="flex gap-[1px] pr-[2px]">
          <div className="w-[17px] h-[18px] border border-[#a8b8c8] bg-[#e4eef8] flex items-end justify-center pb-[3px]"><div className="w-[6px] h-[2px] bg-[#556]" /></div>
          <div className="w-[17px] h-[18px] border border-[#a8b8c8] bg-[#f4f4f4] flex items-center justify-center"><Svg s={10} v="0 0 10 10"><path d="M3 .5h6.500v5h-2M.5 3.500h6.500v6H.5z" fill="none" stroke="#556" /></Svg></div>
          <div className="w-[17px] h-[18px] border border-[#a8b8c8] bg-[#f4f4f4] flex items-center justify-center"><Svg s={9} v="0 0 9 9"><path d="M1 1l7 7M8 1L1 8" stroke="#556" strokeWidth="2" /></Svg></div>
        </div>
      </div>
      <Toolbar />
      <div className="flex h-[535px] shrink-0">
        <LeftPane />
        <div className="w-[5px] h-full flex justify-center shrink-0 pt-[130px] pb-[130px]">
          <div className="w-[2px] h-full border-l-2 border-dotted border-[#d0d0d0]" />
        </div>
        <RightPane />
      </div>
      <BottomPanel />
      <div className="h-[22px] flex items-center justify-end pr-[3px] text-[11.500px] text-[#222] shrink-0">[592,332]</div>
      <Taskbar />
    </div>
  );
}
